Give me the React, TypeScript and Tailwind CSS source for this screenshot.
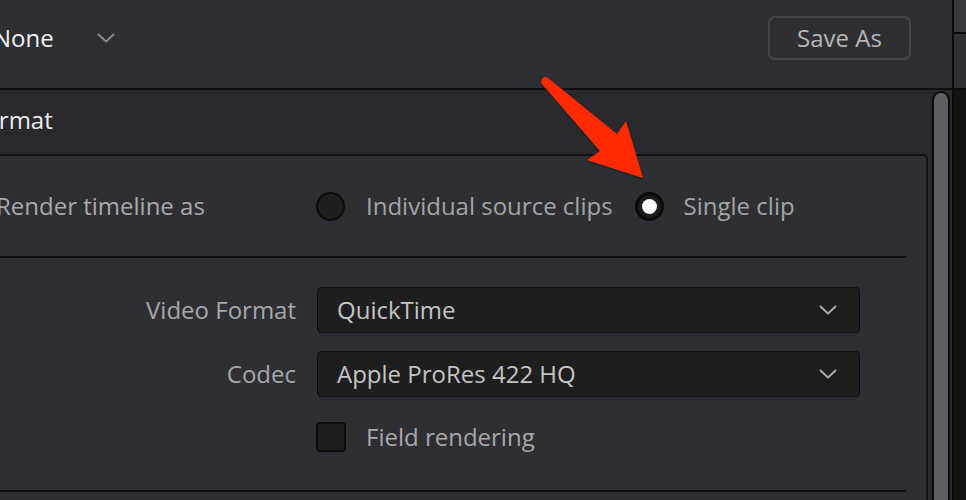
import { FC } from 'react';

const Chevron: FC<{ className?: string }> = ({ className }) => (
  <svg viewBox="0 0 18 10" className={className} fill="none" stroke="currentColor" strokeWidth="2" strokeLinecap="round" strokeLinejoin="round">
    <path d="M1.5 1.5 L9 8.5 L16.5 1.5" />
  </svg>
);

const Radio: FC<{ checked?: boolean }> = ({ checked = false }) =>
  checked ? (
    <div className="w-[29px] h-[29px] rounded-full bg-[#1c1c1d] border-[3px] border-[#0a0a0a] flex items-center justify-center shrink-0">
      <div className="w-[15px] h-[15px] rounded-full bg-white" />
    </div>
  ) : (
    <div className="w-[29px] h-[29px] rounded-full bg-[#1f1f20] border-2 border-[#0c0c0c] shrink-0" />
  );

const Select: FC<{ value: string }> = ({ value }) => (
  <div className="w-[543px] h-[46px] bg-[#1e1e1f] border border-[#0d0d0e] rounded-[4px] flex items-center pl-[19px] pr-[22px]">
    <span className="flex-1 text-[#c4c4c4]">{value}</span>
    <Chevron className="w-[18px] h-[10px] text-[#a9a9a9]" />
  </div>
);

export default function App() {
  return (
    <div
      className="relative w-[966px] h-[500px] overflow-hidden flex bg-[#2e2f34] text-[24px] leading-none"
      style={{ fontFamily: '"Open Sans", "Noto Sans", sans-serif' }}
    >
      {/* left column */}
      <div className="w-[952px] flex flex-col">
        {/* top bar */}
        <div className="h-[90px] shrink-0 flex items-center border-b-2 border-[#0e0e10] bg-[#2e2f35]">
          <span className="-ml-[7px] text-[#f2f2f2] -mt-[12px]">None</span>
          <Chevron className="ml-[43px] w-[18px] h-[10px] text-[#8c8c8e] -mt-[12px]" />
          <div className="flex-1" />
          <button className="mr-[41px] w-[143px] h-[44px] -mt-[12px] border-2 border-[#45464b] rounded-[7px] text-[#b6b6b6] flex items-center justify-center">
            Save As
          </button>
        </div>

        {/* body */}
        <div className="flex-1 flex min-h-0">
          <div className="flex-1 flex flex-col bg-[#29292e]">
            <div className="h-[64px] shrink-0 flex items-center">
              <span className="-ml-[28px] text-[#ececec] -mt-[4px]">Format</span>
            </div>

            <div className="flex-1 mr-[4px] border-t-2 border-r-2 border-[#101012] rounded-tr-[5px] bg-[#2e2f34] flex flex-col">
              {/* render timeline row */}
              <div className="h-[100px] shrink-0 flex items-center">
                <span className="w-[320px] -ml-[4px] text-[#a9a9ab]">Render timeline as</span>
                <Radio />
                <span className="ml-[21px] text-[#a3a4a6]">Individual source clips</span>
                <div className="ml-[22px]">
                  <Radio checked />
                </div>
                <span className="ml-[20px] text-[#a3a4a6]">Single clip</span>
              </div>
              <div className="h-[2px] mr-[20px] bg-[#0f0f11]" />

              {/* format fields */}
              <div className="pt-[29px] flex flex-col">
                <div className="flex items-center">
                  <span className="w-[296px] text-right text-[#a7a7a9]">Video Format</span>
                  <div className="ml-[21px]">
                    <Select value="QuickTime" />
                  </div>
                </div>
                <div className="flex items-center mt-[18px]">
                  <span className="w-[296px] text-right text-[#a7a7a9]">Codec</span>
                  <div className="ml-[21px]">
                    <Select value="Apple ProRes 422 HQ" />
                  </div>
                </div>
                <div className="flex items-center mt-[25px] pl-[316px]">
                  <div className="w-[30px] h-[30px] rounded-[4px] bg-[#1f1f20] border-2 border-[#0c0c0c]" />
                  <span className="ml-[20px] text-[#a7a7a9]">Field rendering</span>
                </div>
              </div>
              <div className="h-[2px] mr-[20px] mt-[38px] bg-[#0f0f11]" />
            </div>
          </div>

          {/* scrollbar */}
          <div className="w-[20px] bg-[#29292e] flex pt-[1px]">
            <div className="w-[18px] h-full border-2 border-b-0 border-[#0b0b0c] rounded-t-[10px] bg-[#5b5f66]" />
            <div className="w-[2px] bg-[#2a2b2f]" />
          </div>
        </div>
      </div>

      <div className="w-[2px] bg-[#0a0a0b]" />

      {/* right strip */}
      <div className="flex-1 flex flex-col">
        <div className="h-[34px] bg-[#3a3b3f] border-b-2 border-[#0a0a0b]" />
        <div className="h-[56px] bg-[#2f3035] border-b-2 border-[#0a0a0b]" />
        <div className="flex-1 bg-[#131314]" />
      </div>

      {/* annotation arrow */}
      <svg className="absolute left-0 top-0 pointer-events-none" width="966" height="500">
        <defs>
          <filter id="sh" x="-20%" y="-20%" width="140%" height="140%">
            <feDropShadow dx="0" dy="1" stdDeviation="1.2" floodColor="#000" floodOpacity="0.45" />
          </filter>
        </defs>
        <path
          d="M543 78 Q545 76 548 78 L617 134 L626 121 L643 178 L587 160 L600 151 L542 84 Q540 81 543 78 Z"
          fill="#ff2a00"
          filter="url(#sh)"
        />
      </svg>
    </div>
  );
}
